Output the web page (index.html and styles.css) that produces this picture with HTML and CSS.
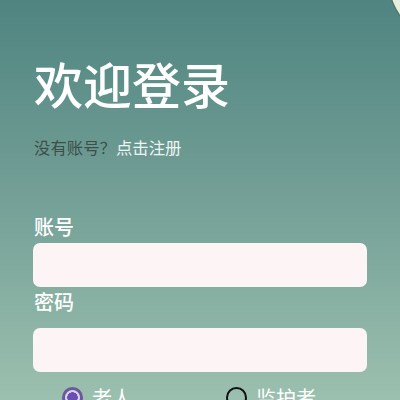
FILE: index.html
```html
<!DOCTYPE html>
<html lang="zh">
<head>
<meta charset="utf-8">
<link rel="stylesheet" href="styles.css">
</head>
<body>
<div class="page">
  <div class="blob"></div>
  <h1 class="title">欢迎登录</h1>
  <p class="sub"><span class="muted">没有账号？</span><span class="link">点击注册</span></p>
  <label class="label first">账号</label>
  <div class="input"></div>
  <label class="label second">密码</label>
  <div class="input"></div>
  <div class="radios">
    <div class="radio on"><span class="dot"></span><span class="rtext">老人</span></div>
    <div class="radio off"><span class="dot"></span><span class="rtext">监护者</span></div>
  </div>
</div>
</body>
</html>
```
FILE: styles.css
```css
html, body {
  margin: 0;
  padding: 0;
  width: 400px;
  height: 400px;
  overflow: hidden;
}
body {
  background: linear-gradient(180deg, #4f8480 0%, #74a097 50%, #9cc0af 100%);
  font-family: "Noto Sans CJK SC", "Noto Sans", sans-serif;
}
.page {
  position: relative;
  height: 400px;
  padding: 0 33px;
  display: flex;
  flex-direction: column;
}
.page > * {
  flex-shrink: 0;
}
.blob {
  position: absolute;
  width: 120px;
  height: 120px;
  border-radius: 50%;
  left: 389px;
  top: -80px;
  background: #e6efdc;
  box-shadow: 0 0 0 1px rgba(40, 70, 60, 0.4);
}
.title {
  margin: 58px 0 0 1px;
  font-size: 49px;
  line-height: 49px;
  font-weight: 500;
  color: #ffffff;
}
.sub {
  margin: 32px 0 0 1px;
  font-size: 16.4px;
  line-height: 16px;
}
.muted { color: #3c4f4b; }
.link { color: #eef5f2; }
.label {
  display: block;
  font-size: 20px;
  line-height: 20px;
  font-weight: 500;
  color: #ffffff;
  margin-left: 1px;
}
.label.first { margin-top: 62px; margin-bottom: 6px; }
.label.second { margin-top: 5px; margin-bottom: 16px; }
.input {
  height: 44px;
  border-radius: 7px;
  background: #fdf5f5;
}
.radios {
  display: flex;
  align-items: center;
  margin-top: 15px;
  padding-left: 29px;
}
.radio {
  display: flex;
  align-items: center;
}
.radio.off { margin-left: 94px; }
.dot {
  box-sizing: border-box;
  width: 21px;
  height: 21px;
  border-radius: 50%;
  margin-right: 9px;
}
.radio.on .dot {
  border: 3px solid #6a5a9c;
  background: radial-gradient(circle, #6a4fb2 0 5px, #d9d3ee 5.5px);
}
.radio.off .dot {
  border: 2.5px solid #111;
}
.rtext {
  font-size: 20px;
  line-height: 20px;
  color: #ffffff;
}
```
